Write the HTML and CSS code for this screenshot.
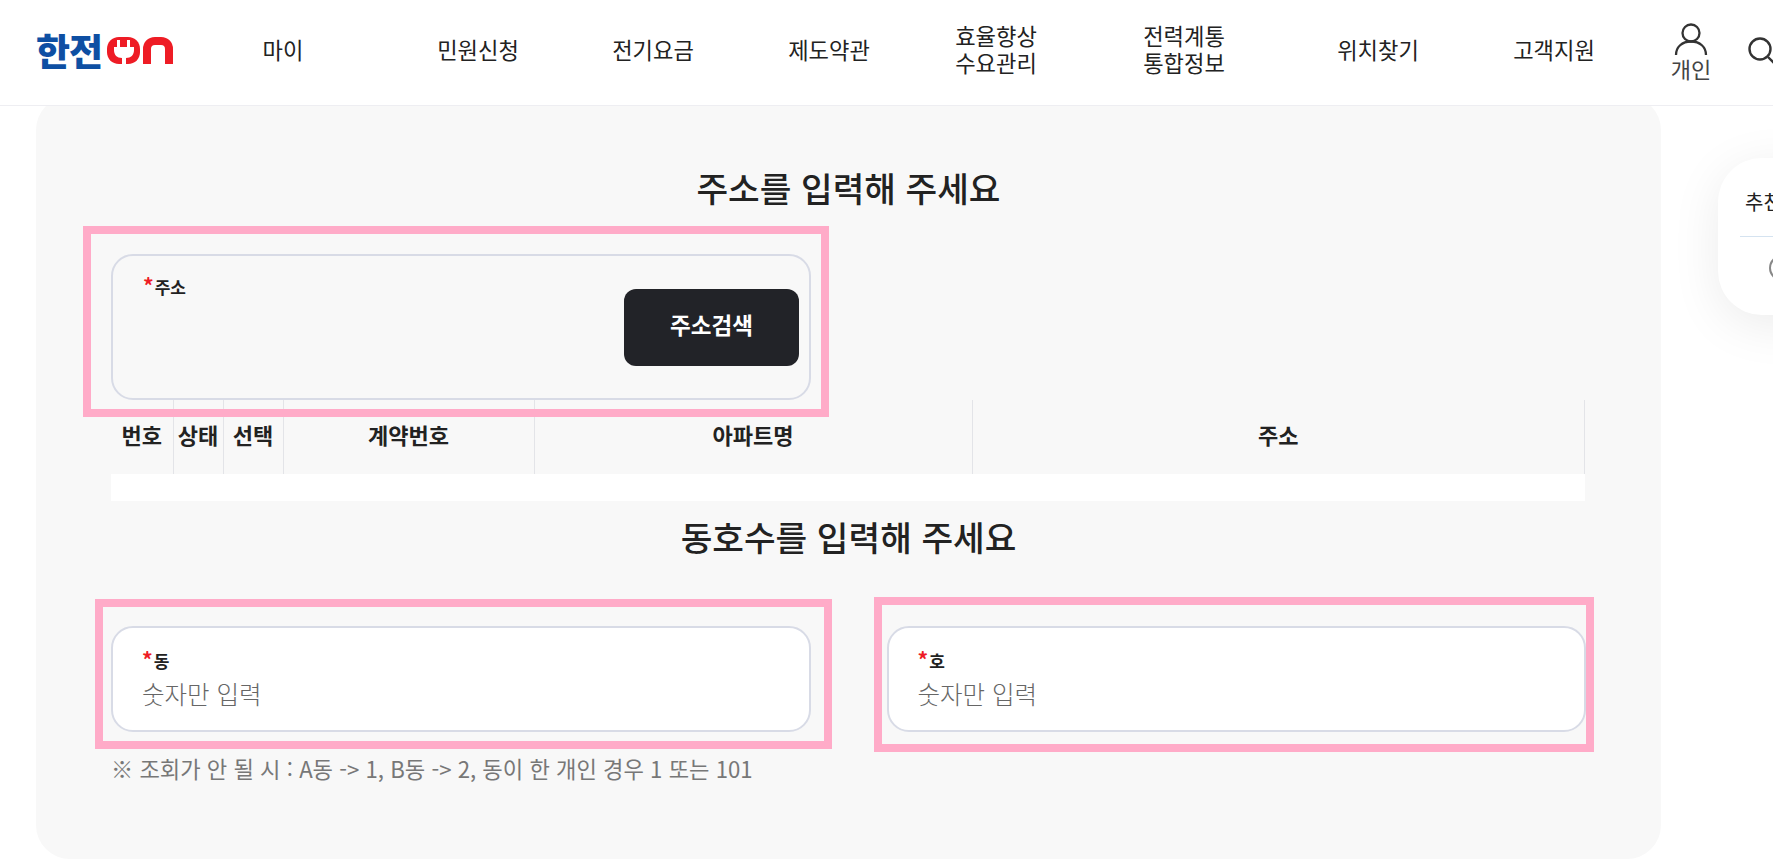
FILE: index.html
```html
<!DOCTYPE html>
<html lang="ko">
<head>
<meta charset="utf-8">
<title>한전ON</title>
<link rel="stylesheet" href="styles.css">
</head>
<body>
<header class="site-header">
  <a class="logo" href="#">
    <span class="logo-text">한전</span>
    <svg class="logo-mark" width="66" height="27" viewBox="0 0 66 27" aria-hidden="true">
      <path fill="#ee1c25" d="M12 0h9c7 0 12 5 12 12v3c0 7-5 12-12 12h-9C5 27 0 22 0 15v-3C0 5 5 0 12 0z"/>
      <path fill="#fff" d="M10 3h3v7h7V3h3v7h4v3c0 5-3 8-8 8h0v6h-4v-6h0c-5 0-8-3-8-8v-3h3z"/>
      <path fill="none" stroke="#ee1c25" stroke-width="8" d="M40 27V12c0-4.500 3-8 8-8h6c5 0 8 3.500 8 8v15"/>
    </svg>
  </a>
  <nav class="main-nav">
    <a class="nav-item">마이</a>
    <a class="nav-item">민원신청</a>
    <a class="nav-item">전기요금</a>
    <a class="nav-item">제도약관</a>
    <a class="nav-item">효율향상<br>수요관리</a>
    <a class="nav-item">전력계통<br>통합정보</a>
    <a class="nav-item">위치찾기</a>
    <a class="nav-item">고객지원</a>
  </nav>
  <a class="user-link">
    <svg class="user-icon" width="36" height="36" viewBox="0 0 36 36" fill="none" stroke="#333" stroke-width="2.300" aria-hidden="true">
      <circle cx="18" cy="11" r="8.500"/>
      <path d="M3 33c0-8 6-13.500 15-13.500S33 25 33 33"/>
    </svg>
    <span>개인</span>
  </a>
  <svg class="search-icon" width="36" height="36" viewBox="0 0 36 36" fill="none" stroke="#333" stroke-width="2.400" aria-hidden="true">
    <circle cx="12" cy="12" r="10.500"/>
    <path d="M20 20l8 8"/>
  </svg>
</header>

<main class="panel">
  <h2 class="section-title first">주소를 입력해 주세요</h2>
  <div class="field-half">
    <div class="field address-field">
      <div class="label"><i>*</i>주소</div>
      <button class="search-btn" type="button">주소검색</button>
    </div>
    <div class="mark mark-address"></div>
  </div>

  <table class="result-table">
    <thead>
      <tr>
        <th class="col-no">번호</th>
        <th class="col-state">상태</th>
        <th class="col-select">선택</th>
        <th class="col-contract">계약번호</th>
        <th class="col-apt">아파트명</th>
        <th>주소</th>
      </tr>
    </thead>
    <tbody>
      <tr><td colspan="6"></td></tr>
    </tbody>
  </table>

  <h2 class="section-title second">동호수를 입력해 주세요</h2>
  <div class="field-row">
    <div class="field-wrap">
      <div class="field input-field">
        <div class="label"><i>*</i>동</div>
        <div class="placeholder">숫자만 입력</div>
      </div>
      <div class="mark mark-dong"></div>
    </div>
    <div class="field-wrap">
      <div class="field input-field">
        <div class="label"><i>*</i>호</div>
        <div class="placeholder">숫자만 입력</div>
      </div>
      <div class="mark mark-ho"></div>
    </div>
  </div>
  <p class="note">※ 조회가 안 될 시 : A동 -&gt; 1, B동 -&gt; 2, 동이 한 개인 경우 1 또는 101</p>
</main>

<aside class="side-card">
  <div class="side-title">추천</div>
  <div class="side-ring"></div>
</aside>
</body>
</html>
```
FILE: styles.css
```css
* { box-sizing: border-box; }
html, body { margin: 0; padding: 0; height: 100%; overflow: hidden; background: #fff; }
body {
  position: relative;
  font-family: "Noto Sans CJK KR", "Noto Sans", sans-serif;
  color: #222;
}
.site-header {
  position: relative;
  z-index: 5;
  display: flex;
  align-items: center;
  height: 106px;
  width: 1773px;
  padding-left: 36px;
  overflow: hidden;
  background: #fff;
  border-bottom: 1px solid #eeeef2;
}
.logo {
  display: flex;
  align-items: center;
  gap: 5px;
  width: 159px;
  flex: none;
  margin-bottom: 5px;
  text-decoration: none;
}
.logo-text {
  font-size: 37px;
  line-height: 40px;
  font-weight: 900;
  letter-spacing: -1px;
  color: #0e4fa3;
}
.main-nav {
  display: grid;
  grid-template-columns: 176px 214px 136px 216px 118px 258px 130px 222px;
  flex: none;
  align-items: center;
  margin-bottom: 7px;
}
.nav-item {
  text-align: center;
  font-size: 22.200px;
  line-height: 27px;
  color: #222;
}
.user-link {
  display: flex;
  flex-direction: column;
  align-items: center;
  flex: none;
  width: 52px;
  margin-top: -4px;
  font-size: 22px;
  line-height: 24px;
  color: #444;
}
.user-icon { margin-bottom: -2px; }
.search-icon { flex: none; margin-left: 31px; margin-top: 4px; }

.panel {
  margin: -10px 0 0 36px;
  width: 1625px;
  height: 763px;
  padding: 0 75px;
  background: #f8f8f8;
  border-radius: 34px;
}
.section-title {
  margin: 0;
  text-align: center;
  font-size: 34.400px;
  line-height: 44px;
  font-weight: 500;
  color: #222;
}
.section-title.first { padding-top: 69px; margin-bottom: 45px; }
.section-title.second { margin-top: 13px; margin-bottom: 68px; }

.field-half { position: relative; width: 700px; }
.field-wrap { position: relative; }
.field {
  border: 2px solid #d8dbe6;
  border-radius: 22px;
}
.address-field {
  display: flex;
  justify-content: space-between;
  align-items: center;
  height: 146px;
  padding: 0 10px 0 30px;
}
.address-field .label { align-self: flex-start; margin-top: 20px; }
.input-field {
  height: 106px;
  padding: 22px 29px 0;
  background: #fff;
}
.label {
  font-size: 17px;
  line-height: 22px;
  font-weight: 700;
  color: #222;
}
.label i {
  font-style: normal;
  font-size: 21px;
  line-height: 0;
  color: #ee1c25;
  margin-right: 1px;
}
.search-btn {
  width: 175px;
  height: 77px;
  padding: 0 0 6px;
  border: 0;
  border-radius: 12px;
  background: #222328;
  color: #fff;
  font-family: inherit;
  font-size: 22.500px;
  font-weight: 700;
}
.placeholder {
  margin-top: 4px;
  font-size: 24.500px;
  line-height: 36px;
  font-weight: 300;
  color: #666;
}
.field-row {
  display: grid;
  grid-template-columns: 1fr 1fr;
  gap: 76px;
}
.mark {
  position: absolute;
  border: 8px solid #ffabc8;
}
.mark-address { left: -28px; right: -18px; top: -28px; bottom: -17px; }
.mark-dong { left: -16px; right: -21px; top: -27px; bottom: -17px; }
.mark-ho { left: -13px; right: -8px; top: -29px; bottom: -20px; }

.result-table {
  width: 1474px;
  table-layout: fixed;
  border-collapse: collapse;
}
.result-table th {
  height: 74px;
  padding: 0 0 6px;
  font-size: 22px;
  font-weight: 700;
  color: #222;
  border-right: 1px solid #e3e4e8;
}
.col-no { width: 62px; }
.col-state { width: 50px; }
.col-select { width: 60px; }
.col-contract { width: 251px; }
.col-apt { width: 438px; }
.result-table td { height: 27px; padding: 0; background: #fff; }
.note {
  margin: 22px 0 0;
  font-size: 22.200px;
  line-height: 28px;
  color: #777;
}
.side-card {
  position: absolute;
  left: 1718px;
  top: 158px;
  width: 200px;
  height: 157px;
  padding: 30px 22px 0;
  background: #fff;
  border-radius: 44px;
  box-shadow: 0 10px 50px rgba(0, 0, 0, .08);
}
.side-title {
  height: 49px;
  padding-left: 5px;
  font-size: 20px;
  line-height: 28px;
  color: #222;
  border-bottom: 1px solid #d5e3f0;
}
.side-ring {
  width: 26px;
  height: 26px;
  margin: 18px 0 0 29px;
  border: 2px solid #888;
  border-radius: 50%;
}
```
